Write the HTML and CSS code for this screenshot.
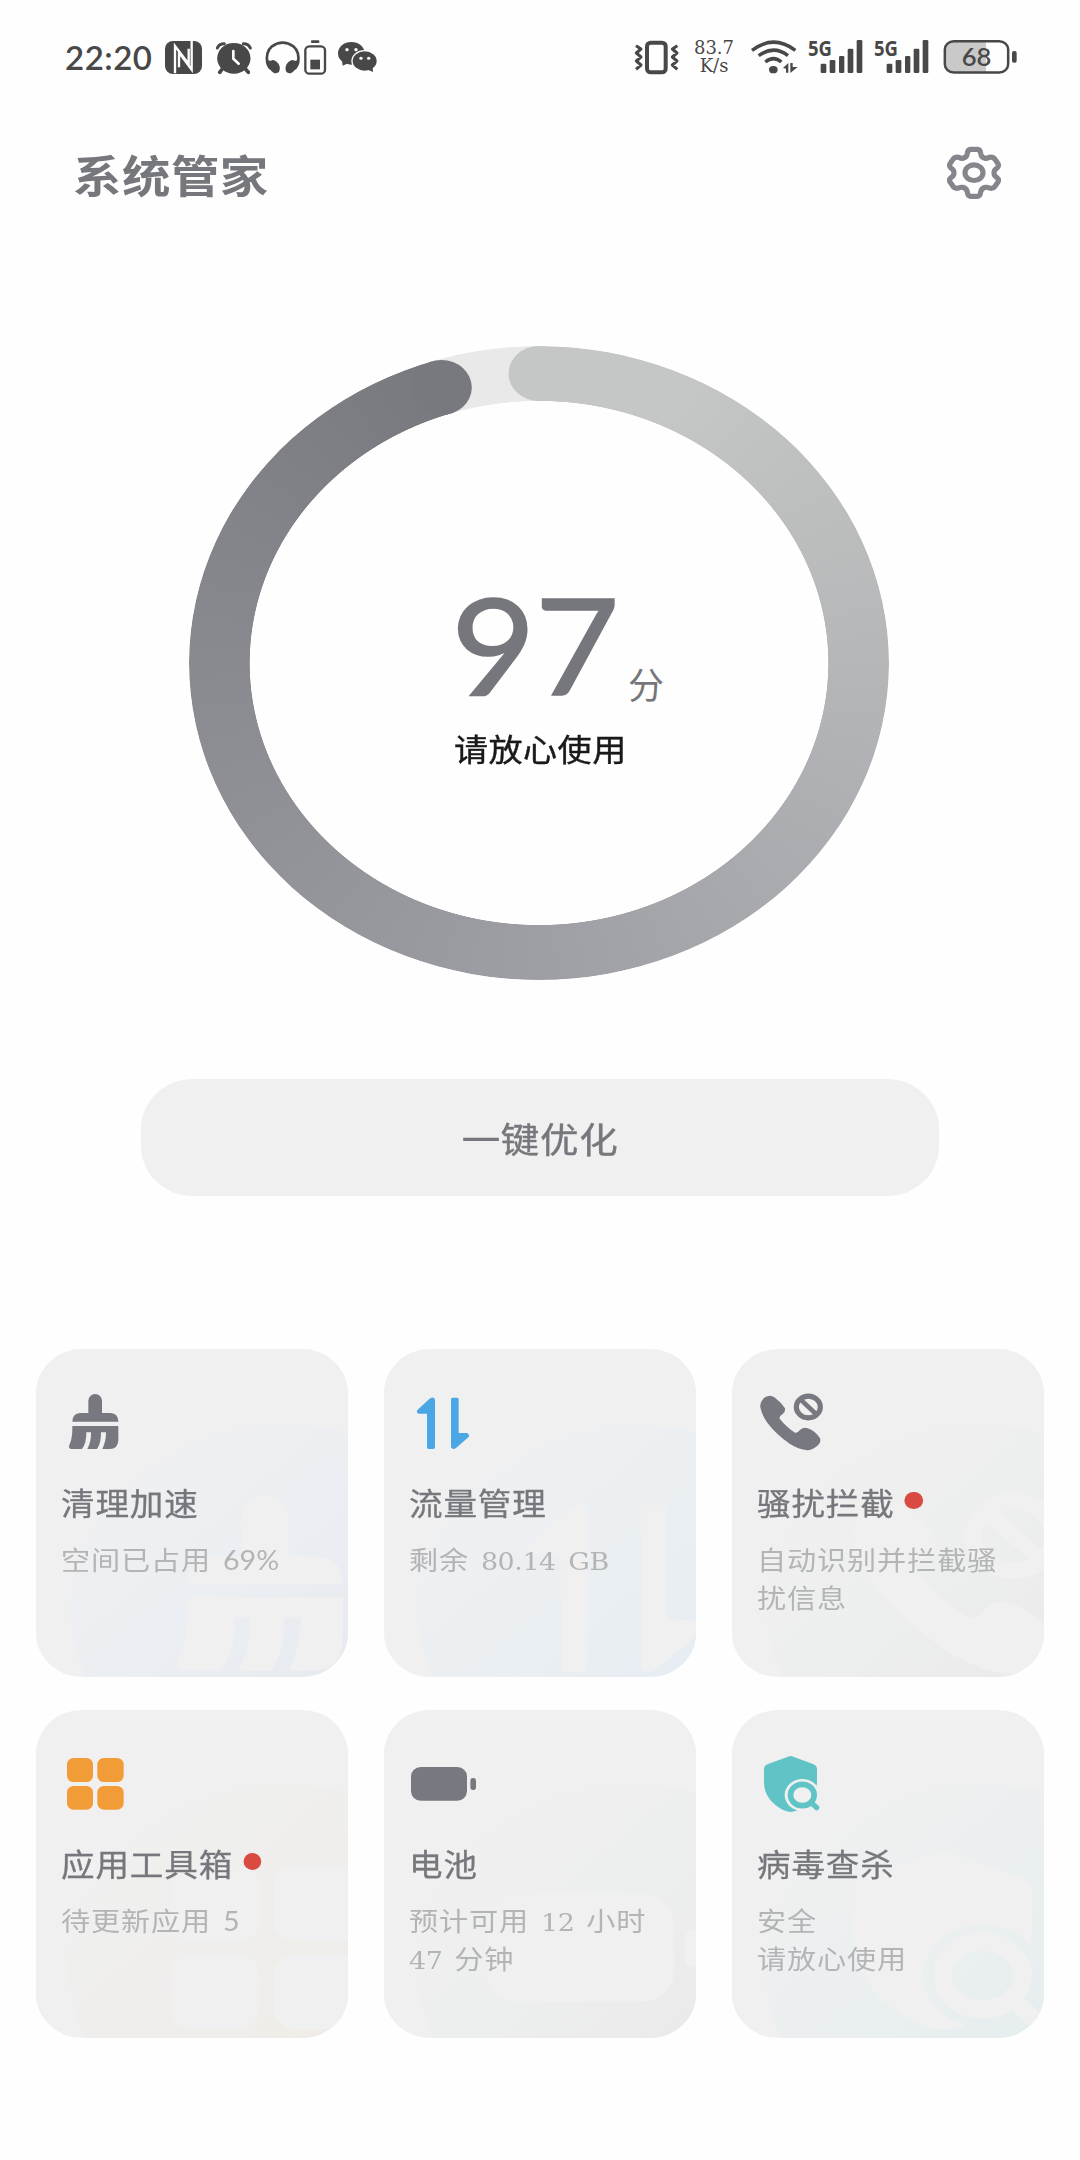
FILE: index.html
```html
<!DOCTYPE html>
<html lang="zh-CN">
<head>
<meta charset="utf-8">
<title>系统管家</title>
<link rel="stylesheet" href="styles.css">
</head>
<body>
<svg class="defs" width="0" height="0" aria-hidden="true">
  <defs>
    <linearGradient id="tint-indigo" x1="0.1" y1="0.1" x2="0.75" y2="0.75"><stop offset="0" stop-color="#f0f0f1"/><stop offset="0.45" stop-color="#ebeef2"/><stop offset="1" stop-color="#e5eaf0"/></linearGradient>
    <linearGradient id="tint-blue" x1="0.1" y1="0.1" x2="0.75" y2="0.75"><stop offset="0" stop-color="#f0f0f1"/><stop offset="0.45" stop-color="#ebeff2"/><stop offset="1" stop-color="#e4ecf2"/></linearGradient>
    <linearGradient id="tint-grey" x1="0.1" y1="0.1" x2="0.75" y2="0.75"><stop offset="0" stop-color="#f0f0f0"/><stop offset="0.45" stop-color="#edeeee"/><stop offset="1" stop-color="#e9e9ea"/></linearGradient>
    <linearGradient id="tint-orange" x1="0.1" y1="0.1" x2="0.75" y2="0.75"><stop offset="0" stop-color="#f0f0f0"/><stop offset="0.45" stop-color="#efeeec"/><stop offset="1" stop-color="#f0ece6"/></linearGradient>
    <linearGradient id="tint-teal" x1="0.1" y1="0.1" x2="0.75" y2="0.75"><stop offset="0" stop-color="#f0f0f0"/><stop offset="0.45" stop-color="#ebeff0"/><stop offset="1" stop-color="#e5edee"/></linearGradient>
    <mask id="shield-cut" maskUnits="userSpaceOnUse" x="120" y="160" width="230" height="220"><rect x="120" y="160" width="230" height="220" fill="#fff"/><ellipse cx="262" cy="300" rx="53" ry="48" fill="#000"/></mask>
    <g id="broom">
      <path d="M205 249V212A20.500 20 0 0 1 246 212V249H272Q295 251 295 275H157Q157 251 180 249Z"/>
      <path d="M157 288H295V332Q293 356 270 357H247Q258 335 258 307H243Q244 338 231 357H202Q214 335 213 307H199Q200 338 186 357H153Q144 354 148 345Q158 325 157 288Z"/>
    </g>
    <g id="arrows">
      <path d="M142 240L178 207Q184 201 190 203Q195 204 195 211V352Q195 357 190 357H176Q171 357 171 352V251H147Q138 249 142 240Z"/>
      <path d="M243 208Q243 203 248 203H261Q266 203 266 208V309H290Q300 312 296 321L258 354Q248 361 243 352Z"/>
    </g>
    <g id="call">
      <path d="M136 232Q134 215 150 202Q165 192 180 203Q200 218 210 235Q212 246 203 252Q193 258 193 265Q215 293 240 308Q248 310 254 301Q264 289 278 295Q300 302 315 325Q319 337 309 346Q292 361 277 361Q250 358 225 342Q185 315 158 280Q140 255 136 232Z"/>
      <g fill="none" stroke="currentColor"><ellipse cx="280" cy="231" rx="36" ry="32.500" stroke-width="15.500"/><path d="M257 209L303 252" stroke-width="14"/></g>
    </g>
    <g id="tiles">
      <rect x="141" y="189" width="78" height="72" rx="20" ry="19"/><rect x="232" y="189" width="79" height="72" rx="20" ry="19"/>
      <rect x="141" y="273" width="78" height="71" rx="20" ry="19"/><rect x="232" y="273" width="79" height="71" rx="20" ry="19"/>
    </g>
    <g id="cell"><rect x="123" y="216" width="168" height="101" rx="29" ry="28"/><rect x="301" y="249" width="17" height="36" rx="8"/></g>
    <g id="shield">
      <path mask="url(#shield-cut)" d="M147 222Q147 212 159 207L219 185Q227 181 235 185L294 207Q306 212 306 222V262Q303 315 253 343Q227 359 200 343Q147 312 147 262Z"/>
      <g fill="none" stroke="currentColor"><ellipse cx="262" cy="300" rx="35.500" ry="32" stroke-width="17"/><path d="M288 322L305 338" stroke-width="16" stroke-linecap="round"/></g>
    </g>
  </defs>
</svg>

<header class="status">
  <span class="time">22:20</span>
  <svg class="st nfc" viewBox="372 57 117 108" width="39" height="36">
    <rect x="375" y="63" width="111" height="99" rx="24" fill="#484848"/>
    <path d="M405 160V78L446 132V86M455 60V149L417 98V142" fill="none" stroke="#fefefe" stroke-width="7"/>
  </svg>
  <svg class="st alarm" viewBox="525 57 117 108" width="39" height="36">
    <g fill="none" stroke="#484848" stroke-linecap="round" stroke-width="9"><path d="M532 84Q537 71 553 71"/><path d="M631 84Q626 71 610 71"/><path d="M546 148L539 157M617 148L625 157" stroke-width="11"/></g>
    <ellipse cx="581.500" cy="115" rx="50" ry="46" fill="#484848"/>
    <path d="M580 93V116L596 131" fill="none" stroke="#fefefe" stroke-width="8" stroke-linecap="round"/>
  </svg>
  <svg class="st headset" viewBox="675 57 105 108" width="35" height="36">
    <path d="M682 130Q676 96 696 79Q728 57 760 79Q780 96 774 130" fill="none" stroke="#484848" stroke-width="8"/>
    <ellipse cx="703" cy="140" rx="15" ry="21" transform="rotate(-28 703 140)" fill="#484848"/><ellipse cx="753" cy="140" rx="15" ry="21" transform="rotate(28 753 140)" fill="#484848"/>
    <path d="M678 122Q690 118 694 128L692 150Q678 142 678 122ZM778 122Q766 118 762 128L764 150Q778 142 778 122Z" fill="#484848"/>
  </svg>
  <svg class="st cellv" viewBox="789 57 72 108" width="24" height="36">
    <rect x="796" y="79" width="59" height="82" rx="12" fill="none" stroke="#484848" stroke-width="7"/><rect x="813" y="61" width="25" height="8" rx="3" fill="#484848"/><rect x="811" y="119" width="29" height="29" fill="#484848"/>
  </svg>
  <svg class="st chat" viewBox="891 57 123 108" width="41" height="36">
    <ellipse cx="934" cy="100" rx="40" ry="34" fill="#484848"/><path d="M906 120L908 137L926 129Z" fill="#484848"/>
    <ellipse cx="974" cy="123" rx="40" ry="33" fill="#fefefe"/><ellipse cx="974" cy="123" rx="36" ry="29" fill="#484848"/><path d="M980 148L999 156L998 138Z" fill="#484848"/>
    <g fill="#fefefe"><ellipse cx="921" cy="89" rx="5" ry="5"/><ellipse cx="948" cy="89" rx="5" ry="5"/><ellipse cx="963" cy="115" rx="5" ry="4.500"/><ellipse cx="986" cy="115" rx="5" ry="4.500"/></g>
  </svg>
  <span class="spacer"></span>
  <svg class="st" viewBox="72 57 138 108" width="46" height="36">
    <rect x="111" y="68" width="56" height="89" rx="11" fill="none" stroke="#484848" stroke-width="12"/>
    <path d="M78 77L93 87L79 99L93 111L79 123L93 135L78 148M202 77L187 87L201 99L187 111L201 123L187 135L202 148" fill="none" stroke="#484848" stroke-width="9" stroke-linejoin="round"/>
  </svg>
  <span class="speed"><span>83.7</span><span>K/s</span></span>
  <svg class="st wifi" viewBox="420 57 147 108" width="49" height="36">
    <g fill="none" stroke="#484848" stroke-width="10.500"><path d="M426 91Q491 42 556 91"/><path d="M446 107Q491 74 534 107"/><path d="M466 126Q491 106 514 126"/></g>
    <ellipse cx="490" cy="149" rx="13" ry="11" fill="#484848"/>
    <path d="M519 144L535 129V158H528V146ZM541 129H548V141H563L541 159Z" fill="#484848"/>
  </svg>
  <svg class="st sig1" viewBox="591 57 171 108" width="57" height="36">
    <text class="net" x="594" y="108" textLength="72" lengthAdjust="spacingAndGlyphs">5G</text>
    <g fill="#484848"><rect x="632" y="131" width="17" height="28" rx="4"/><rect x="659" y="120" width="17" height="39" rx="4"/><rect x="687" y="108" width="16" height="51" rx="4"/><rect x="713" y="86" width="17" height="73" rx="4"/><rect x="740" y="60" width="17" height="99" rx="4"/></g>
  </svg>
  <svg class="st sig2" viewBox="591 57 171 108" width="57" height="36">
    <text class="net" x="594" y="108" textLength="72" lengthAdjust="spacingAndGlyphs">5G</text>
    <g fill="#484848"><rect x="632" y="131" width="17" height="28" rx="4"/><rect x="659" y="120" width="17" height="39" rx="4"/><rect x="687" y="108" width="16" height="51" rx="4"/><rect x="713" y="86" width="17" height="73" rx="4"/><rect x="740" y="60" width="17" height="99" rx="4"/></g>
  </svg>
  <svg class="st power" viewBox="999 57 225 108" width="75" height="36">
    <path d="M1128 64H1031Q1005 65 1005 90V132Q1005 156 1031 157H1128Z" fill="#c9c9c9"/>
    <rect x="1004.500" y="63.500" width="190" height="94" rx="27" ry="25" fill="none" stroke="#484848" stroke-width="7.500"/><rect x="1206" y="93" width="14" height="35" rx="6" fill="#484848"/>
    <text class="level" x="1055" y="139" textLength="89" lengthAdjust="spacingAndGlyphs">68</text>
  </svg>
</header>

<div class="titlebar">
  <h1>系统管家</h1>
  <svg class="gear" viewBox="1008 375 171 168" width="57" height="56" fill="none" stroke="#85868b" stroke-width="15.500">
    <path d="M1082 388H1102Q1111 389 1112 400Q1114 413 1126 415Q1132 415 1138 412Q1149 410 1155 418L1164 431Q1168 439 1160 445Q1152 450 1152 458Q1152 467 1160 472Q1168 478 1164 486L1155 499Q1149 507 1138 504Q1132 501 1126 502Q1114 504 1112 516Q1111 528 1102 529H1082Q1073 528 1072 516Q1070 504 1058 502Q1052 501 1046 504Q1035 507 1029 499L1020 486Q1016 478 1024 472Q1032 467 1032 458Q1032 450 1024 445Q1016 439 1020 431L1029 418Q1035 410 1046 412Q1052 415 1058 415Q1070 413 1072 400Q1073 389 1082 388Z"/>
    <ellipse cx="1092" cy="458" rx="27" ry="23.500"/>
  </svg>
</div>

<section class="gauge">
  <div class="ring track"></div>
  <div class="ring fill"></div>
  <svg class="caps" viewBox="0 0 200 200" preserveAspectRatio="none">
    <circle cx="100" cy="8.700" r="8.700" fill="#c5c7c6"/>
    <circle cx="72.100" cy="13.100" r="8.700" fill="#78797f"/>
  </svg>
  <div class="reading">
    <div class="score"><span class="num">97</span><span class="unit">分</span></div>
    <div class="advice">请放心使用</div>
  </div>
</section>

<button class="optimize" type="button"><span>一键优化</span></button>

<main class="cards">
  <article class="card">
    <svg class="mark" viewBox="48 57 936 984"><ellipse cx="790" cy="830" rx="642" ry="547" fill="url(#tint-indigo)"/><use href="#broom" transform="translate(470 497) scale(3.36 3.18) translate(-147 -192)"/></svg>
    <svg class="icon grey" viewBox="123 177 216 195"><use href="#broom"/></svg>
    <h2>清理加速</h2>
    <p>空间已占用 <span class="sans">69%</span></p>
  </article>
  <article class="card">
    <svg class="mark" viewBox="42 57 936 984"><ellipse cx="784" cy="830" rx="642" ry="547" fill="url(#tint-blue)"/><use href="#arrows" transform="translate(573 525) scale(3.32 3.25) translate(-171 -203)"/></svg>
    <svg class="icon blue" viewBox="117 177 216 195"><use href="#arrows"/></svg>
    <h2>流量管理</h2>
    <p>剩余 <span class="slab">80.14 GB</span></p>
  </article>
  <article class="card">
    <svg class="mark" viewBox="51 57 936 984"><ellipse cx="793" cy="830" rx="642" ry="547" fill="url(#tint-grey)"/><use href="#call" transform="translate(748 490) scale(3.35 3.19) translate(-236 -191)"/></svg>
    <svg class="icon grey" viewBox="126 177 216 195"><use href="#call"/></svg>
    <h2>骚扰拦截<i class="dot"></i></h2>
    <p>自动识别并拦截骚<br>扰信息</p>
  </article>
  <article class="card">
    <svg class="mark" viewBox="48 45 936 984"><ellipse cx="790" cy="814" rx="645" ry="547" fill="url(#tint-orange)"/><use href="#tiles" transform="translate(453 778) scale(3.4 3.18) translate(-141 -273)"/></svg>
    <svg class="icon orange" viewBox="123 165 216 195"><use href="#tiles"/></svg>
    <h2>应用工具箱<i class="dot"></i></h2>
    <p>待更新应用 <span class="sans">5</span></p>
  </article>
  <article class="card">
    <svg class="mark" viewBox="42 45 936 984"><ellipse cx="784" cy="814" rx="645" ry="547" fill="url(#tint-grey)"/><use href="#cell" transform="translate(350 597) scale(3.345 3.2) translate(-123 -216)"/></svg>
    <svg class="icon grey" viewBox="117 165 216 195"><use href="#cell"/></svg>
    <h2>电池</h2>
    <p>预计可用 <span class="slab">12</span> 小时<br><span class="slab">47</span> 分钟</p>
  </article>
  <article class="card">
    <svg class="mark" viewBox="51 45 936 984"><ellipse cx="793" cy="814" rx="645" ry="547" fill="url(#tint-teal)"/><use href="#shield" transform="translate(415 468) scale(3.365 3.19) translate(-147 -183)"/></svg>
    <svg class="icon teal" viewBox="126 165 216 195"><use href="#shield"/></svg>
    <h2>病毒查杀</h2>
    <p>安全<br>请放心使用</p>
  </article>
</main>
</body>
</html>
```
FILE: styles.css
```css
* { box-sizing: border-box; }

body {
  margin: 0;
  width: 1080px;
  height: 2160px;
  padding-top: 39px;
  overflow: hidden;
  background: #fefefe;
  color: #76777c;
  font-family: "Noto Sans CJK SC", "Noto Sans", sans-serif;
}

svg { display: block; flex: none; }
.st { overflow: visible; }
.defs { position: absolute; }

/* status bar */
.status {
  display: flex;
  height: 36px;
  padding: 0 62px 0 65px;
  color: #484848;
}
.spacer { flex: 1; }
.time {
  width: 88px;
  font: 600 33px/36px Lato, "Noto Sans", sans-serif;
  letter-spacing: 0.5px;
  white-space: nowrap;
}
.nfc { margin-left: 11px; }
.alarm { margin-left: 12px; }
.headset { margin-left: 11px; }
.cellv { margin-left: 3px; }
.chat { margin-left: 10px; }
.speed {
  display: flex;
  flex-direction: column;
  align-items: center;
  width: 50px;
  margin-left: 9px;
  font: 18px/18px "DejaVu Serif", serif;
}
.wifi { margin-left: 11px; }
.sig1 { margin-left: 8px; }
.sig2 { margin-left: 9px; }
.power { margin-left: 13px; }
.net { font: 700 62px "Noto Sans", sans-serif; fill: #484848; }
.level { font: 600 72px Lato, sans-serif; fill: #484848; }

/* page title */
.titlebar {
  display: flex;
  justify-content: space-between;
  align-items: center;
  height: 56px;
  margin-top: 70px;
  padding: 0 77px 0 73px;
}
h1 {
  margin: 2px 0 0;
  font-size: 44px;
  font-weight: 700;
  line-height: 56px;
  letter-spacing: 0.5px;
  transform: scaleX(1.1);
  transform-origin: left;
}

/* score ring */
.gauge {
  display: grid;
  width: 700px;
  height: 634px;
  margin: 145px 0 0 189px;
}
.gauge > * { grid-area: 1 / 1; }
.ring {
  border-radius: 50%;
  -webkit-mask: radial-gradient(closest-side, transparent 82.55%, #000 82.75%);
  mask: radial-gradient(closest-side, transparent 82.55%, #000 82.75%);
}
.track { background: #e8e9e8; }
.fill {
  background: conic-gradient(#c5c7c6 0deg, #c5c7c6 28deg, #b7b9ba 80deg, #adaeb2 120deg, #9e9fa4 180deg, #8b8c91 262deg, #78797f 340.5deg, transparent 340.5deg);
}
.caps { position: relative; width: 700px; height: 634px; }
.reading {
  position: relative;
  padding: 238px 0 0 262px;
}
.score {
  display: flex;
  align-items: flex-end;
  height: 120px;
}
.num {
  width: 171px;
  font: 400 133px/120px Lato, sans-serif;
  letter-spacing: -1px;
  transform: scaleX(1.1);
  transform-origin: left;
  -webkit-text-stroke: 1.5px #76777c;
}
.unit {
  margin-left: 6px;
  font-size: 36px;
  line-height: 42px;
}
.advice {
  margin: 22px 0 0 3px;
  color: #191919;
  font-size: 31px;
  line-height: 44px;
  letter-spacing: 0.4px;
  transform: scaleX(1.1);
  transform-origin: left;
  -webkit-text-stroke: 0.4px #191919;
}

.optimize {
  display: block;
  width: 798px;
  height: 117px;
  margin: 99px 0 0 141px;
  padding: 0;
  border: 0;
  border-radius: 52px / 50px;
  background: #f0f0f0;
  color: #76777c;
  font: 400 35px/115px "Noto Sans CJK SC", sans-serif;
  letter-spacing: 0.6px;
}
.optimize span {
  display: block;
  transform: scaleX(1.1);
  -webkit-text-stroke: 0.4px #76777c;
}

/* feature cards */
.cards {
  display: grid;
  grid-template-columns: repeat(3, 312px);
  grid-auto-rows: 328px;
  gap: 33px 36px;
  margin: 153px 0 0 36px;
}
.card {
  position: relative;
  padding: 40px 0 0 25px;
  overflow: hidden;
  border-radius: 46px / 44px;
  background: #f0f0f0;
}
.mark {
  position: absolute;
  inset: 0;
  width: 312px;
  height: 328px;
  color: #f0f0f0;
  fill: currentColor;
}
.icon {
  position: relative;
  width: 72px;
  height: 65px;
  fill: currentColor;
}
.grey { color: #787980; }
.blue { color: #4ba6e6; }
.orange { color: #f29c38; }
.teal { color: #60c4c6; }
h2 {
  position: relative;
  display: flex;
  align-items: center;
  width: 260px;
  margin: 28px 0 0;
  font-size: 30.5px;
  font-weight: 400;
  line-height: 40px;
  letter-spacing: 0.8px;
  transform: scaleX(1.1);
  transform-origin: left;
  -webkit-text-stroke: 0.3px #76777c;
}
.dot {
  width: 16.4px;
  height: 17px;
  margin: -3px 0 0 9px;
  border-radius: 50%;
  background: #d94a40;
}
p {
  position: relative;
  width: 260px;
  margin: 18px 0 0;
  color: #b3b4b6;
  font-size: 26.5px;
  line-height: 37.500px;
  letter-spacing: 0.8px;
  word-spacing: 4px;
  white-space: nowrap;
  transform: scaleX(1.1);
  transform-origin: left;
}
.sans { font-family: Lato, sans-serif; font-size: 26px; line-height: 0; letter-spacing: 0; }
.slab { font-family: "DejaVu Serif", serif; font-size: 24.5px; line-height: 0; letter-spacing: -0.4px; }
```
